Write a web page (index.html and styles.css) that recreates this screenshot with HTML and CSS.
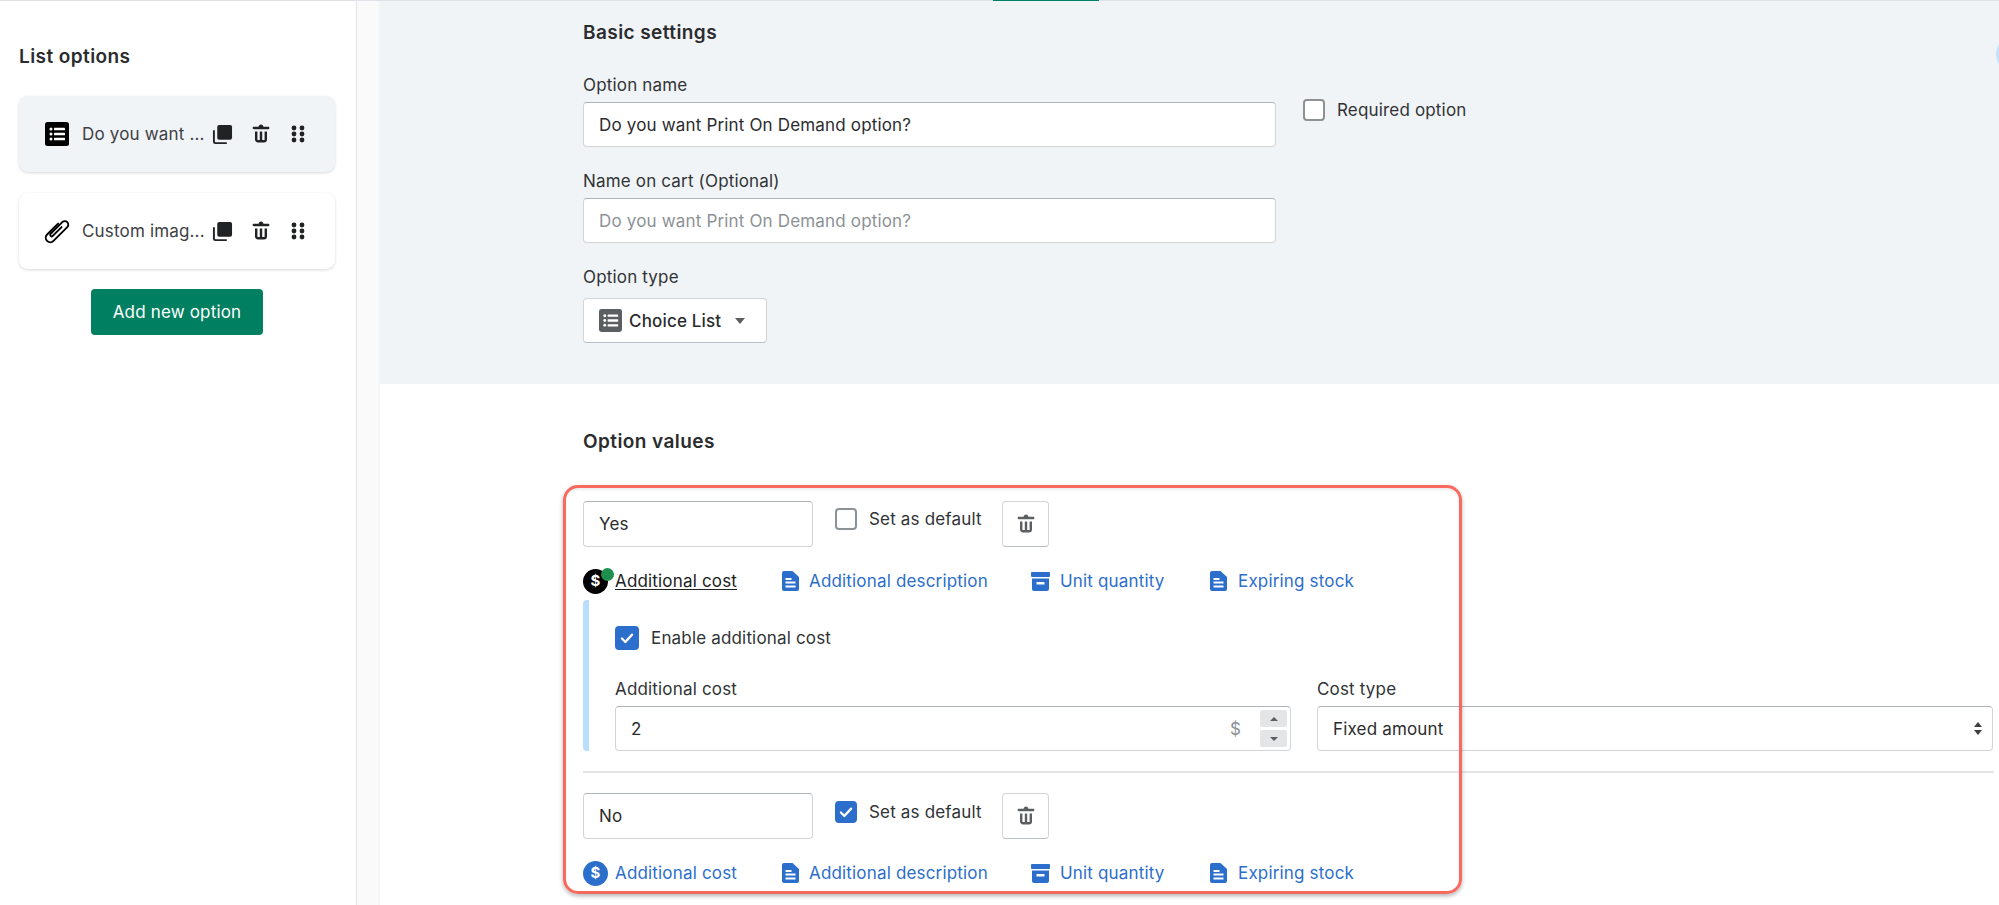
FILE: index.html
```html
<!DOCTYPE html>
<html lang="en">
<head>
<meta charset="utf-8">
<title>List options</title>
<link rel="stylesheet" href="styles.css">
</head>
<body>
<svg class="defs" width="0" height="0" aria-hidden="true">
  <symbol id="i-trash" viewBox="0 0 20 20"><path d="M8 3.994C8 2.893 8.895 2 10 2s2 .893 2 1.994h4c.552 0 1 .446 1 .997a1 1 0 0 1-1 .997H4c-.552 0-1-.447-1-.997s.448-.997 1-.997h4zM5 14.508V8h2v6.5c0 .276.224.5.5.5H9V8h2v7h1.5a.5.5 0 0 0 .5-.5V8h2v6.508A2.496 2.496 0 0 1 12.5 17h-5C6.12 17 5 15.884 5 14.508z"/></symbol>
  <symbol id="i-copy" viewBox="0 0 22 22"><rect x="5.5" y="1" width="15.5" height="15.5" rx="2"/><path d="M1 6.5v12A2.5 2.5 0 0 0 3.500 21h12v-2h-11.500a1 1 0 0 1-1-1V6.500z"/></symbol>
  <symbol id="i-drag" viewBox="0 0 16 18"><circle cx="4" cy="3" r="2.400"/><circle cx="12" cy="3" r="2.400"/><circle cx="4" cy="9" r="2.400"/><circle cx="12" cy="9" r="2.400"/><circle cx="4" cy="15" r="2.400"/><circle cx="12" cy="15" r="2.400"/></symbol>
  <symbol id="i-list" viewBox="0 0 24 24"><rect width="24" height="24" rx="2.500"/><g fill="#fff"><circle cx="6" cy="7" r="1.500"/><circle cx="6" cy="12" r="1.500"/><circle cx="6" cy="17" r="1.500"/><rect x="9" y="5.800" width="11" height="2.400" rx=".5"/><rect x="9" y="10.800" width="11" height="2.400" rx=".5"/><rect x="9" y="15.800" width="11" height="2.400" rx=".5"/></g></symbol>
  <symbol id="i-doc" viewBox="0 0 17 20"><path d="M2 0h8.500L17 6v12a2 2 0 0 1-2 2H2a2 2 0 0 1-2-2V2a2 2 0 0 1 2-2z"/><g fill="#fff"><rect x="3.500" y="7" width="6" height="2"/><rect x="3.500" y="10.500" width="10" height="2"/><rect x="3.500" y="14.500" width="10" height="2"/></g></symbol>
  <symbol id="i-box" viewBox="0 0 19 19"><rect width="19" height="5" rx="1"/><path d="M1 6.500h17V17a2 2 0 0 1-2 2H3a2 2 0 0 1-2-2z"/><rect x="5.500" y="10" width="8" height="2.500" fill="#fff"/></symbol>
  <symbol id="i-check" viewBox="0 0 16 16"><path d="M3.500 8.500l3 3 6-6.500" fill="none" stroke="#fff" stroke-width="2" stroke-linecap="round" stroke-linejoin="round"/></symbol>
</svg>

<div class="app">
  <aside class="sidebar">
    <h2 class="side-title">List options</h2>
    <div class="option-card option-card-active">
      <svg class="opt-icon"><use href="#i-list"/></svg>
      <span class="opt-name">Do you want ...</span>
      <svg class="act-copy"><use href="#i-copy"/></svg>
      <svg class="act-trash"><use href="#i-trash"/></svg>
      <svg class="act-drag"><use href="#i-drag"/></svg>
    </div>
    <div class="option-card">
      <svg class="opt-icon" viewBox="0 0 24 24"><g transform="translate(12 12) rotate(45)"><path d="M-4.500-6V9.500a4.500 4.500 0 0 0 9 0V-10a3.500 3.500 0 0 0-7 0V6.500a1.500 1.500 0 0 0 3 0V-6" fill="none" stroke="#000" stroke-width="1.900" stroke-linecap="round" stroke-linejoin="round"/></g></svg>
      <span class="opt-name">Custom imag...</span>
      <svg class="act-copy"><use href="#i-copy"/></svg>
      <svg class="act-trash"><use href="#i-trash"/></svg>
      <svg class="act-drag"><use href="#i-drag"/></svg>
    </div>
    <div class="add-wrap"><button class="add-btn">Add new option</button></div>
  </aside>

  <div class="gutter"></div>

  <main class="main">
    <section class="basic">
      <h2 class="section-title">Basic settings</h2>
      <div class="basic-row">
        <div class="basic-col">
          <div class="label label-first">Option name</div>
          <div class="field">Do you want Print On Demand option?</div>
          <div class="label label-next">Name on cart (Optional)</div>
          <div class="field field-placeholder">Do you want Print On Demand option?</div>
          <div class="label label-next">Option type</div>
          <button class="type-btn">
            <svg class="type-icon"><use href="#i-list"/></svg>
            <span>Choice List</span>
            <span class="caret"></span>
          </button>
        </div>
        <label class="required"><span class="box"></span><span>Required option</span></label>
      </div>
    </section>

    <section class="values">
      <h2 class="section-title">Option values</h2>

      <div class="value-row">
        <div class="field value-input">Yes</div>
        <div class="default"><span class="box"></span><span>Set as default</span></div>
        <button class="trash-btn"><svg><use href="#i-trash"/></svg></button>
      </div>
      <div class="links">
        <a class="link link-cost link-current"><span class="dollar dollar-dark">$<i class="dot"></i></span><span class="link-text">Additional cost</span></a>
        <a class="link link-desc"><svg class="doc"><use href="#i-doc"/></svg><span>Additional description</span></a>
        <a class="link link-unit"><svg class="archive"><use href="#i-box"/></svg><span>Unit quantity</span></a>
        <a class="link"><svg class="doc"><use href="#i-doc"/></svg><span>Expiring stock</span></a>
      </div>
      <div class="panel">
        <div class="enable"><span class="box box-on"><svg><use href="#i-check"/></svg></span><span>Enable additional cost</span></div>
        <div class="cost-grid">
          <div>
            <div class="label label-cost">Additional cost</div>
            <div class="field number">
              <span class="number-value">2</span>
              <span class="suffix">$</span>
              <span class="spinner">
                <span class="spin"><span class="tri-up"></span></span>
                <span class="spin"><span class="tri-down"></span></span>
              </span>
            </div>
          </div>
          <div>
            <div class="label label-cost">Cost type</div>
            <div class="field select">
              <span>Fixed amount</span>
              <span class="updown"><span class="tri-up"></span><span class="tri-down"></span></span>
            </div>
          </div>
        </div>
      </div>
      <hr class="sep">

      <div class="value-row">
        <div class="field value-input">No</div>
        <div class="default default-on"><span class="box box-on"><svg><use href="#i-check"/></svg></span><span>Set as default</span></div>
        <button class="trash-btn"><svg><use href="#i-trash"/></svg></button>
      </div>
      <div class="links">
        <a class="link link-cost"><span class="dollar">$</span><span class="link-text">Additional cost</span></a>
        <a class="link link-desc"><svg class="doc"><use href="#i-doc"/></svg><span>Additional description</span></a>
        <a class="link link-unit"><svg class="archive"><use href="#i-box"/></svg><span>Unit quantity</span></a>
        <a class="link"><svg class="doc"><use href="#i-doc"/></svg><span>Expiring stock</span></a>
      </div>
    </section>
  </main>
</div>

<div class="top-line"></div>
<div class="top-tab"></div>
<div class="edge-circle"></div>
<div class="highlight"></div>
</body>
</html>
```
FILE: styles.css
```css
* { box-sizing: border-box; }
html, body { margin: 0; height: 905px; overflow: hidden; background: #fff; }
body { font-family: Inter, "Liberation Sans", sans-serif; font-size: 17px; letter-spacing: .17px; line-height: 20px; color: #2a2c2e; position: relative; }
.defs { position: absolute; }
h2 { margin: 0; height: 24px; font-size: 19px; letter-spacing: .42px; line-height: 26px; font-weight: 600; color: #2a2c2e; }
button { font: inherit; letter-spacing: inherit; color: inherit; }

.app { display: flex; height: 905px; }

/* sidebar */
.sidebar { width: 357px; flex: none; border-right: 1px solid #e4e5e7; padding: 44px 21px 0 19px; }
.side-title { margin-bottom: 28px; }
.option-card { display: flex; align-items: center; height: 76px; padding-left: 26px; margin-bottom: 21px; background: #fff; border-radius: 9px; box-shadow: 0 1px 3px rgba(63,63,68,.2); color: #3d4043; }
.option-card-active { background: #f1f4f7; }
.opt-icon { width: 24px; height: 24px; flex: none; overflow: visible; }
.opt-name { width: 129px; margin-left: 13px; margin-right: 1px; flex: none; white-space: nowrap; }
.act-copy { width: 21px; height: 21px; fill: #202223; flex: none; }
.act-trash { width: 24px; height: 24px; margin-left: 16px; fill: #202223; flex: none; }
.act-drag { width: 16px; height: 18px; margin-left: 17px; fill: #202223; flex: none; }
.add-wrap { display: flex; justify-content: center; margin-top: -1px; }
.add-btn { width: 172px; height: 46px; border: 0; border-radius: 4px; background: #008060; color: #fff; font-weight: 400; }

.gutter { width: 23px; flex: none; background: #fafafa; box-shadow: inset -2px 0 2px -1px rgba(0,0,0,.03); }

/* main */
.main { flex: 1; min-width: 0; }
.basic { height: 384px; padding: 20px 5px 0 203px; background: #f1f4f7; }
.basic-row { display: flex; align-items: flex-start; }
.basic-col { width: 693px; flex: none; }
.label { height: 20px; margin-bottom: 7px; color: #303335; }
.label-first { margin-top: 31px; }
.label-next { margin-top: 24px; }
.field { display: flex; align-items: center; height: 45px; padding: 0 15px; background: #fff; border: 1px solid #d2d5d8; border-top-color: #aeb4b9; border-radius: 4px; white-space: nowrap; }
.field-placeholder { color: #8c9196; }

.type-btn { display: flex; align-items: center; width: 184px; height: 45px; margin-top: 11px; padding: 0 15px; background: #fff; border: 1px solid #d2d5d8; border-bottom-color: #babfc3; border-radius: 4px; font-weight: 500; }
.type-icon { width: 23px; height: 23px; margin-right: 7px; fill: #5c5f62; flex: none; }
.caret { width: 0; height: 0; margin-left: 14px; border-left: 5px solid transparent; border-right: 5px solid transparent; border-top: 6px solid #5c5f62; }

.box { display: inline-flex; align-items: center; justify-content: center; width: 22px; height: 22px; flex: none; background: #fff; border: 2px solid #8c9196; border-radius: 4px; }
.box-on { background: #2c6ecb; border-color: #2c6ecb; }
.box-on svg { width: 18px; height: 18px; flex: none; }

.required { display: flex; align-items: center; gap: 12px; margin: 55px 0 0 27px; color: #303335; }

/* values */
.values { padding: 45px 5px 0 203px; }
.values .section-title { margin-bottom: 48px; }
.value-row { display: flex; align-items: flex-start; height: 46px; }
.value-input { width: 230px; height: 46px; flex: none; }
.default { display: flex; align-items: center; gap: 12px; width: 167px; flex: none; margin: 7px 0 0 22px; color: #303335; }
.default-on { margin-top: 8px; }
.trash-btn { display: flex; align-items: center; justify-content: center; width: 47px; height: 46px; padding: 0; background: #fff; border: 1px solid #d2d5d8; border-bottom-color: #babfc3; border-radius: 4px; }
.trash-btn svg { width: 24px; height: 24px; fill: #5c5f62; }

.links { display: flex; align-items: center; height: 26px; margin-top: 21px; margin-bottom: -1px; color: #2c6ecb; }
.link { display: flex; align-items: center; white-space: nowrap; }
.link-cost { width: 199px; gap: 7px; }
.link-desc { width: 249px; gap: 10px; }
.link-unit { width: 179px; gap: 10px; }
.link .doc { margin-right: 11px; }
.link-desc .doc { margin-right: 0; }
.doc { width: 17px; height: 20px; fill: #2c6ecb; flex: none; }
.archive { width: 19px; height: 19px; fill: #2c6ecb; flex: none; }
.dollar { position: relative; display: flex; align-items: center; justify-content: center; width: 25px; height: 25px; flex: none; background: #2c6ecb; border-radius: 50%; color: #fff; font-size: 15px; font-weight: 700; }
.dollar-dark { background: #000; }
.dot { position: absolute; top: -1px; right: -6px; width: 13px; height: 13px; background: #1f8f4e; border-radius: 50%; }
.link-current { color: #202223; }
.link-current .link-text { text-decoration: underline; text-underline-offset: 2px; }

.panel { margin-top: 7px; height: 151px; padding: 26px 0 0 26px; border-left: 6px solid #b9defc; border-radius: 4px 0 0 4px; }
.enable { display: flex; align-items: center; gap: 12px; height: 23px; color: #303335; }
.enable .box { width: 24px; height: 24px; }
.cost-grid { display: grid; grid-template-columns: 676px 676px; column-gap: 26px; margin-top: 30px; }
.label-cost { margin-bottom: 7px; }
.number { position: relative; }
.number-value { flex: 1; }
.suffix { margin-right: 19px; color: #8c9196; }
.spinner { display: flex; flex-direction: column; gap: 3px; margin-right: -12px; }
.spin { display: flex; align-items: center; justify-content: center; width: 27px; height: 17px; background: #e4e5e7; border-radius: 2px; }
.tri-up, .tri-down { display: block; width: 0; height: 0; border-left: 4px solid transparent; border-right: 4px solid transparent; }
.tri-up { border-bottom: 4px solid #5c5f62; }
.tri-down { border-top: 4px solid #5c5f62; }
.select { justify-content: space-between; padding-right: 10px; }
.updown { display: flex; flex-direction: column; gap: 3px; }
.updown .tri-up { border-bottom-width: 5px; border-bottom-color: #3d4043; }
.updown .tri-down { border-top-width: 5px; border-top-color: #3d4043; }

.sep { height: 2px; margin: 20px 0; border: 0; background: #e4e5e7; }

/* overlays */
.top-line { position: absolute; left: 0; top: 0; width: 100%; height: 1px; background: #dfe3e8; }
.top-tab { position: absolute; left: 993px; top: 0; width: 106px; height: 1px; background: #008060; }
.edge-circle { position: absolute; left: 1996px; top: 36px; width: 36px; height: 36px; background: #c4e3fb; border-radius: 50%; }
.highlight { position: absolute; left: 563px; top: 485px; width: 899px; height: 409px; border: 3px solid #f96a5e; border-radius: 15px; box-shadow: 0 2px 4px rgba(0,0,0,.3), inset 0 2px 3px rgba(0,0,0,.08); pointer-events: none; }
```
